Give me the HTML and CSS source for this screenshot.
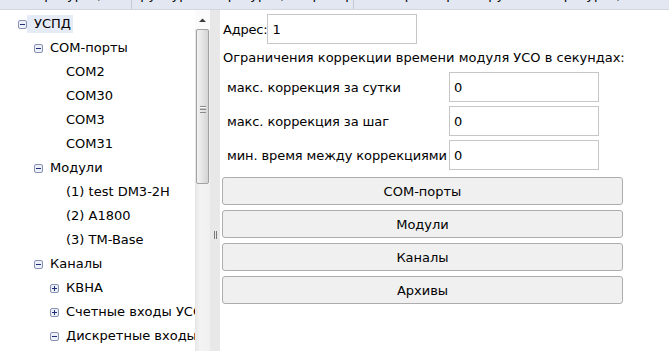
FILE: index.html
```html
<!DOCTYPE html>
<html>
<head>
  <meta charset="utf-8">
  <title>УСПД</title>
  <link rel="stylesheet" href="styles.css">
</head>
<body>
  <div class="tabs">
    <div class="tab tab-1"><span>Конфигурация</span></div>
    <div class="tab tab-2"><span>Структура конфигурации прибора</span></div>
    <div class="tab tab-3"><span>Параметры и группы конфигурации</span></div>
  </div>

  <div class="main">
    <div class="tree">
      <ul class="tree-list">
        <li>
          <div class="node lvl-0">
            <svg class="toggle" width="9" height="9" viewBox="0 0 9 9"><rect x="0.5" y="0.5" width="8" height="8" rx="1.5" fill="#eef0f8" stroke="#8591b6"/><path d="M2 4.5h5" stroke="#1f2d7c"/></svg>
            <span class="label selected">УСПД</span>
          </div>
          <ul class="tree-list">
            <li>
              <div class="node lvl-1">
                <svg class="toggle" width="9" height="9" viewBox="0 0 9 9"><rect x="0.5" y="0.5" width="8" height="8" rx="1.5" fill="#eef0f8" stroke="#8591b6"/><path d="M2 4.5h5" stroke="#1f2d7c"/></svg>
                <span class="label">COM-порты</span>
              </div>
              <ul class="tree-list">
                <li><div class="node lvl-2 leaf"><span class="label">COM2</span></div></li>
                <li><div class="node lvl-2 leaf"><span class="label">COM30</span></div></li>
                <li><div class="node lvl-2 leaf"><span class="label">COM3</span></div></li>
                <li><div class="node lvl-2 leaf"><span class="label">COM31</span></div></li>
              </ul>
            </li>
            <li>
              <div class="node lvl-1">
                <svg class="toggle" width="9" height="9" viewBox="0 0 9 9"><rect x="0.5" y="0.5" width="8" height="8" rx="1.5" fill="#eef0f8" stroke="#8591b6"/><path d="M2 4.5h5" stroke="#1f2d7c"/></svg>
                <span class="label">Модули</span>
              </div>
              <ul class="tree-list">
                <li><div class="node lvl-2 leaf"><span class="label">(1) test DM3-2H</span></div></li>
                <li><div class="node lvl-2 leaf"><span class="label">(2) A1800</span></div></li>
                <li><div class="node lvl-2 leaf"><span class="label">(3) TM-Base</span></div></li>
              </ul>
            </li>
            <li>
              <div class="node lvl-1">
                <svg class="toggle" width="9" height="9" viewBox="0 0 9 9"><rect x="0.5" y="0.5" width="8" height="8" rx="1.5" fill="#eef0f8" stroke="#8591b6"/><path d="M2 4.5h5" stroke="#1f2d7c"/></svg>
                <span class="label">Каналы</span>
              </div>
              <ul class="tree-list">
                <li>
                  <div class="node lvl-2">
                    <svg class="toggle" width="9" height="9" viewBox="0 0 9 9"><rect x="0.5" y="0.5" width="8" height="8" rx="1.5" fill="#eef0f8" stroke="#8591b6"/><path d="M2 4.5h5M4.5 2v5" stroke="#1f2d7c"/></svg>
                    <span class="label">КВНА</span>
                  </div>
                </li>
                <li>
                  <div class="node lvl-2">
                    <svg class="toggle" width="9" height="9" viewBox="0 0 9 9"><rect x="0.5" y="0.5" width="8" height="8" rx="1.5" fill="#eef0f8" stroke="#8591b6"/><path d="M2 4.5h5M4.5 2v5" stroke="#1f2d7c"/></svg>
                    <span class="label">Счетные входы УСО</span>
                  </div>
                </li>
                <li>
                  <div class="node lvl-2">
                    <svg class="toggle" width="9" height="9" viewBox="0 0 9 9"><rect x="0.5" y="0.5" width="8" height="8" rx="1.5" fill="#eef0f8" stroke="#8591b6"/><path d="M2 4.5h5" stroke="#1f2d7c"/></svg>
                    <span class="label">Дискретные входы</span>
                  </div>
                </li>
              </ul>
            </li>
          </ul>
        </li>
      </ul>
    </div>

    <div class="scrollbar">
      <div class="scroll-up"><svg width="7" height="4" viewBox="0 0 7 4"><path d="M0 4L3.5 0.5L7 4z" fill="#3c3c3c"/></svg></div>
      <div class="scroll-thumb"><span class="grip"></span></div>
    </div>

    <div class="splitter"><span class="splitter-grip"></span></div>

    <div class="content">
      <div class="addr-row">
        <label class="addr-label" for="addr">Адрес:</label>
        <input id="addr" class="field" type="text" value="1">
      </div>
      <p class="section-title">Ограничения коррекции времени модуля УСО в секундах:</p>
      <div class="limits">
        <label class="limit-label">макс. коррекция за сутки</label>
        <input class="field" type="text" value="0">
        <label class="limit-label">макс. коррекция за шаг</label>
        <input class="field" type="text" value="0">
        <label class="limit-label">мин. время между коррекциями</label>
        <input class="field" type="text" value="0">
      </div>
      <div class="buttons">
        <button class="nav-button">COM-порты</button>
        <button class="nav-button">Модули</button>
        <button class="nav-button">Каналы</button>
        <button class="nav-button">Архивы</button>
      </div>
    </div>
  </div>
</body>
</html>
```

FILE: styles.css
```css
html, body {
  height: 100%;
}

body {
  margin: 0;
  font-family: "DejaVu Sans", Verdana, sans-serif;
  font-size: 13px;
  color: #000;
  background-color: #fff;
  display: flex;
  flex-direction: column;
  overflow: hidden;
}

/* cut-off tab strip at the top */
.tabs {
  display: flex;
  height: 9px;
  background-color: #e3e7f1;
  border-bottom: 1px solid #d3d7e1;
  flex-shrink: 0;
}

.tab {
  height: 9px;
  overflow: hidden;
  display: flex;
  align-items: flex-end;
  justify-content: center;
  border-right: 1px solid #c4c8d3;
}

.tab span {
  line-height: 14px;
  margin-bottom: 7px;
  white-space: nowrap;
}

.tab-1 {
  width: 131px;
}

.tab-2 {
  width: 221px;
}

.tab-3 {
  flex: 1;
  border-right: none;
}

.main {
  flex: 1;
  display: flex;
  min-height: 0;
}

/* tree */
.tree {
  width: 195px;
  flex-shrink: 0;
  overflow: hidden;
  padding-top: 2px;
}

.tree-list {
  list-style: none;
  margin: 0;
  padding: 0;
}

.node {
  height: 24px;
  display: flex;
  align-items: center;
  white-space: nowrap;
}

.toggle {
  flex-shrink: 0;
  margin-right: 7px;
}

.leaf {
  padding-left: 66px !important;
}

.lvl-0 {
  padding-left: 18px;
}

.lvl-1 {
  padding-left: 34px;
}

.lvl-2 {
  padding-left: 50px;
}

.label {
  line-height: 18px;
}

.selected {
  background-color: #e6ebf8;
  margin-left: -7px;
  padding: 0 2px 0 7px;
}

/* vertical scrollbar */
.scrollbar {
  width: 15px;
  flex-shrink: 0;
  background: linear-gradient(to right, #e6e6e6 0, #f3f3f3 5px, #f0f0f0 100%);
  display: flex;
  flex-direction: column;
  align-items: center;
}

.scroll-up {
  height: 19px;
  width: 15px;
  display: flex;
  align-items: center;
  justify-content: center;
  background-color: #fbfbfb;
}

.scroll-thumb {
  width: 13px;
  height: 155px;
  box-sizing: border-box;
  border: 1px solid #a2a2a2;
  border-radius: 2px;
  background: linear-gradient(to right, #f2f2f2 0, #e6e6e6 45%, #d4d4d4 100%);
  display: flex;
  align-items: center;
  justify-content: center;
}

.grip {
  width: 6px;
  height: 5px;
  border-top: 1px solid #8a8a8a;
  border-bottom: 1px solid #8a8a8a;
  background: linear-gradient(#fff 0, #fff 1px, #8a8a8a 2px, #8a8a8a 3px, transparent 3px);
  margin-top: 6px;
}

.splitter {
  width: 10px;
  flex-shrink: 0;
  background-color: #e8e8e8;
  display: flex;
  align-items: center;
  justify-content: center;
}

.splitter-grip {
  width: 3px;
  height: 8px;
  border-left: 1px solid #777;
  border-right: 1px solid #777;
  box-sizing: border-box;
  margin-top: 108px;
}

/* right pane */
.content {
  padding: 4px 0 0 2px;
  width: 401px;
}

.addr-row {
  display: flex;
  align-items: center;
  padding-left: 1px;
}

.addr-label {
  margin-right: 0;
  letter-spacing: -0.2px;
}

.field {
  width: 150px;
  height: 30px;
  box-sizing: border-box;
  border: 1px solid #c6c6c6;
  padding: 0 4px;
  font-family: inherit;
  font-size: 13px;
  color: #000;
  background-color: #fff;
}

.section-title {
  margin: 6px 0 0 1px;
  line-height: 16px;
  white-space: nowrap;
}

.limits {
  display: grid;
  grid-template-columns: 227px 150px;
  row-gap: 4px;
  margin-top: 6px;
  align-items: center;
}

.limit-label {
  padding-left: 5px;
  white-space: nowrap;
  letter-spacing: -0.1px;
}

.buttons {
  display: flex;
  flex-direction: column;
  gap: 5px;
  margin-top: 7px;
}

.nav-button {
  height: 28px;
  width: 401px;
  background-color: #f0f0f0;
  border: 1px solid #adadad;
  border-radius: 3px;
  font-family: inherit;
  font-size: 13px;
  font-weight: normal;
  color: #000;
  cursor: pointer;
}

.nav-button:hover {
  background-color: #e5f1fb;
}
```
